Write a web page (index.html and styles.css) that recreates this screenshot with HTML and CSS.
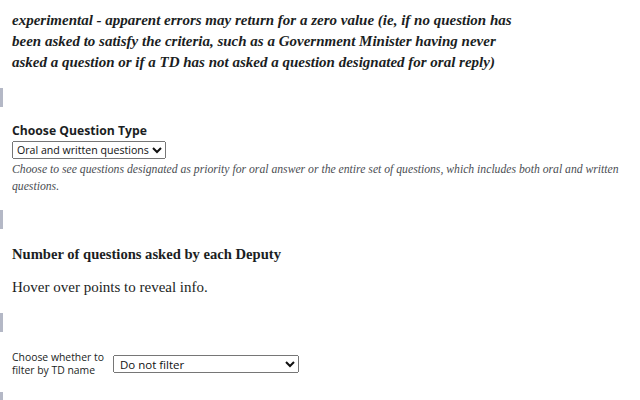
FILE: index.html
```html
<!DOCTYPE html>
<html lang="en">
<head>
  <meta charset="UTF-8" />
  <title>Parliamentary questions</title>
  <link rel="stylesheet" href="styles.css">
</head>
<body>
  <div class="cell">
    <p class="warn">experimental - apparent errors may return for a zero value (ie, if no question has been asked to satisfy the criteria, such as a Government Minister having never asked a question or if a TD has not asked a question designated for oral reply)</p>
  </div>

  <div class="cell gap"><span class="mark"></span></div>

  <div class="cell">
    <form class="pick">
      <label class="pick-label" for="qtype">Choose Question Type</label>
      <select id="qtype">
        <option>Oral and written questions</option>
        <option>Oral questions only</option>
      </select>
      <div class="note">Choose to see questions designated as priority for oral answer or the entire set of questions, which includes both oral and written questions.</div>
    </form>
  </div>

  <div class="cell gap"><span class="mark"></span></div>

  <div class="cell">
    <h3>Number of questions asked by each Deputy</h3>
    <p class="hint">Hover over points to reveal info.</p>
  </div>

  <div class="cell gap"><span class="mark"></span></div>

  <div class="cell">
    <form class="row">
      <label for="tdname">Choose whether to filter by TD name</label>
      <select id="tdname">
        <option>Do not filter</option>
      </select>
    </form>
  </div>

  <div class="cell gap"><span class="mark"></span></div>
</body>
</html>
```

FILE: styles.css
```css
*{box-sizing:border-box}
body{margin:0;padding:0 12px;font-family:"Liberation Serif",serif;color:#1b1e23;background:#fff}
.cell{position:relative}
.gap{height:19px;margin:15px 0}
.mark{position:absolute;left:-12px;top:0;width:3px;height:19px;background:#b4b8c6}
.warn{margin:10px 0 0;font-weight:bold;font-style:italic;font-size:15px;line-height:21px;max-width:505px}
.pick{font-family:"Open Sans",sans-serif}
.pick-label{display:block;font-weight:bold;font-size:12.2px;line-height:18px}
.pick select{display:block;font-family:"Open Sans",sans-serif;font-size:10.6px;padding:0;margin-top:1px;color:#111}
.note{font-family:"Liberation Serif",serif;font-style:italic;font-size:11.7px;line-height:17px;color:#4a4d52;margin-top:2px}
h3{margin:0;font-size:14.6px;line-height:20px}
.hint{margin:12px 0 0;font-size:15px;line-height:22px}
.row{display:flex;align-items:center;gap:1px;margin-top:19px;font-family:"Open Sans",sans-serif;font-size:10.4px;line-height:13px}
.row label{width:100px;flex-shrink:0}
.row select{width:186px;height:18px;padding:0 0 0 2px;font-family:"Open Sans",sans-serif;font-size:11.5px;color:#111}
```
